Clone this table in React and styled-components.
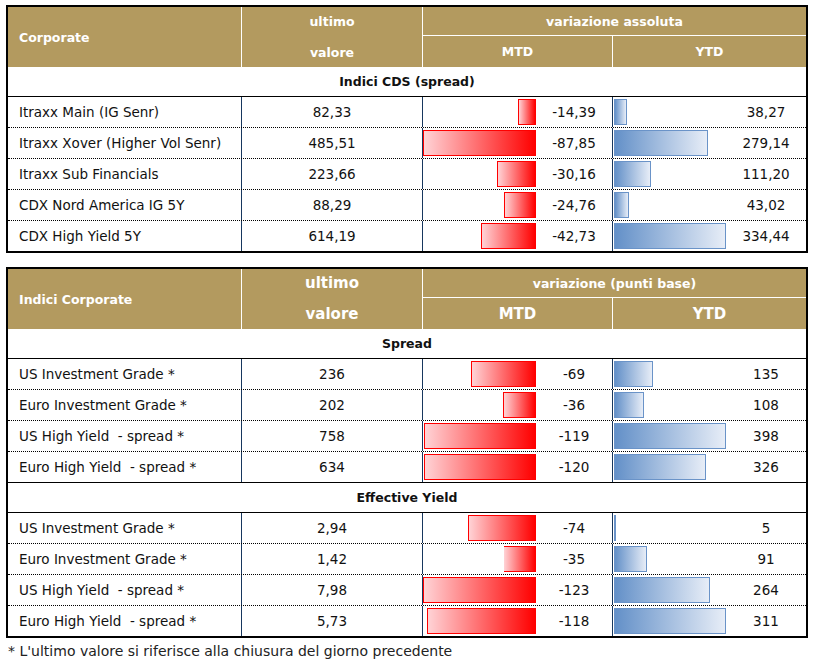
import styled, { createGlobalStyle } from "styled-components";

const GlobalStyle = createGlobalStyle`
  body {
    margin: 0;
    background: #fff;
    font-family: "DejaVu Sans", "Liberation Sans", sans-serif;
  }
`;

const COLS = "233px 181px 190px 194px";

const Page = styled.div`
  padding: 5px 0 0 6px;
  width: 802px;
  color: #111;
`;

const Frame = styled.div`
  width: 802px;
  border: 2px solid #000;
  box-sizing: border-box;
  margin-bottom: ${(p) => p.$gap || 0}px;
`;

const Head = styled.div`
  display: grid;
  grid-template-columns: ${COLS};
  grid-template-rows: 29px 31px;
  background: #b39a5f;
  color: #fff;
  font-weight: bold;
`;

const HeadCell = styled.div`
  display: flex;
  align-items: center;
  justify-content: ${(p) => (p.$left ? "flex-start" : "center")};
  padding-left: ${(p) => (p.$left ? "11px" : "0")};
  border-left: ${(p) => (p.$first ? "none" : "1px solid #fff")};
  border-bottom: ${(p) => (p.$underline ? "1px solid #fff" : "none")};
  grid-column: ${(p) => p.$col || "auto"};
  grid-row: ${(p) => p.$row || "auto"};
  font-size: ${(p) => p.$size || 12.5}px;
  line-height: ${(p) => p.$lh || "normal"};
  text-align: center;
  box-sizing: border-box;
`;

const Section = styled.div`
  height: ${(p) => (p.$top ? 31 : 30)}px;
  border-top: ${(p) => (p.$top ? "1px solid #000" : "none")};
  border-bottom: 1px solid #000;
  box-sizing: border-box;
  display: flex;
  align-items: center;
  justify-content: center;
  font-weight: bold;
  font-size: 12.5px;
`;

const Row = styled.div`
  display: grid;
  grid-template-columns: ${COLS};
  height: ${(p) => (p.$last ? 30 : 31)}px;
  border-bottom: ${(p) => (p.$last ? "none" : "1px dotted #000")};
  box-sizing: border-box;
  font-size: 13.5px;
`;

const Label = styled.div`
  display: flex;
  align-items: center;
  padding-left: 11px;
  white-space: pre;
`;

const Value = styled.div`
  display: flex;
  align-items: center;
  justify-content: center;
  border-left: 1px solid #17375e;
`;

const BarCell = styled.div`
  display: flex;
  border-left: 1px solid #17375e;
`;

const Track = styled.div`
  width: 113px;
  flex: none;
  display: flex;
  justify-content: ${(p) => (p.$red ? "flex-end" : "flex-start")};
  padding: 2px 0 2px ${(p) => (p.$red ? 0 : 1)}px;
  box-sizing: border-box;
`;

const Bar = styled.div`
  height: 100%;
  box-sizing: border-box;
  background: ${(p) =>
    p.$red
      ? "linear-gradient(to right, #ffd3d6, #ff0000)"
      : "linear-gradient(to right, #6390c8, #e7edf7)"};
  border: 1px solid ${(p) => (p.$red ? "#ff0000" : "#6a93c8")};
  border-left-width: ${(p) => (p.$open ? 0 : 1)}px;
`;

const Num = styled.div`
  flex: 1;
  display: flex;
  align-items: center;
  justify-content: center;
`;

const Note = styled.div`
  margin-top: 5px;
  padding-left: 2px;
  font-size: 14px;
  color: #222;
`;

const cds = [
  ["Itraxx Main (IG Senr)", "82,33", "-14,39", 18, "38,27", 13],
  ["Itraxx Xover (Higher Vol Senr)", "485,51", "-87,85", 113, "279,14", 94],
  ["Itraxx Sub Financials", "223,66", "-30,16", 39, "111,20", 37],
  ["CDX Nord America IG 5Y", "88,29", "-24,76", 32, "43,02", 15],
  ["CDX High Yield 5Y", "614,19", "-42,73", 55, "334,44", 112],
];

const spread = [
  ["US Investment Grade *", "236", "-69", 65, "135", 39],
  ["Euro Investment Grade *", "202", "-36", 33, "108", 30],
  ["US High Yield  - spread *", "758", "-119", 112, "398", 112],
  ["Euro High Yield  - spread *", "634", "-120", 112, "326", 92],
];

const yieldRows = [
  ["US Investment Grade *", "2,94", "-74", 68, "5", 2],
  ["Euro Investment Grade *", "1,42", "-35", 32, "91", 33, true],
  ["US High Yield  - spread *", "7,98", "-123", 113, "264", 96],
  ["Euro High Yield  - spread *", "5,73", "-118", 109, "311", 113],
];

const DataRow = ({ r, last }) => (
  <Row $last={last}>
    <Label>{r[0]}</Label>
    <Value>{r[1]}</Value>
    <BarCell>
      <Track $red>
        <Bar $red $open={r[6]} style={{ width: r[3] }} />
      </Track>
      <Num>{r[2]}</Num>
    </BarCell>
    <BarCell>
      <Track>
        <Bar style={{ width: r[5] }} />
      </Track>
      <Num>{r[4]}</Num>
    </BarCell>
  </Row>
);

const Header = ({ title, group, big }) => (
  <Head>
    <HeadCell $first $left $row="1 / 3">{title}</HeadCell>
    <HeadCell $row="1 / 3" $lh="31px" $size={big ? 15 : 12.5}>
      ultimo
      <br />
      valore
    </HeadCell>
    <HeadCell $col="3 / 5" $underline>{group}</HeadCell>
    <HeadCell $size={big ? 15 : 12.5}>MTD</HeadCell>
    <HeadCell $size={big ? 15 : 12.5}>YTD</HeadCell>
  </Head>
);

export default function App() {
  return (
    <Page>
      <GlobalStyle />
      <Frame $gap={14}>
        <Header title="Corporate" group="variazione assoluta" />
        <Section>Indici CDS (spread)</Section>
        {cds.map((r, i) => (
          <DataRow key={r[0]} r={r} last={i === cds.length - 1} />
        ))}
      </Frame>
      <Frame>
        <Header title="Indici Corporate" group="variazione (punti base)" big />
        <Section>Spread</Section>
        {spread.map((r, i) => (
          <DataRow key={r[0]} r={r} last={i === spread.length - 1} />
        ))}
        <Section $top>Effective Yield</Section>
        {yieldRows.map((r, i) => (
          <DataRow key={r[0]} r={r} last={i === yieldRows.length - 1} />
        ))}
      </Frame>
      <Note>* L'ultimo valore si riferisce alla chiusura del giorno precedente</Note>
    </Page>
  );
}
